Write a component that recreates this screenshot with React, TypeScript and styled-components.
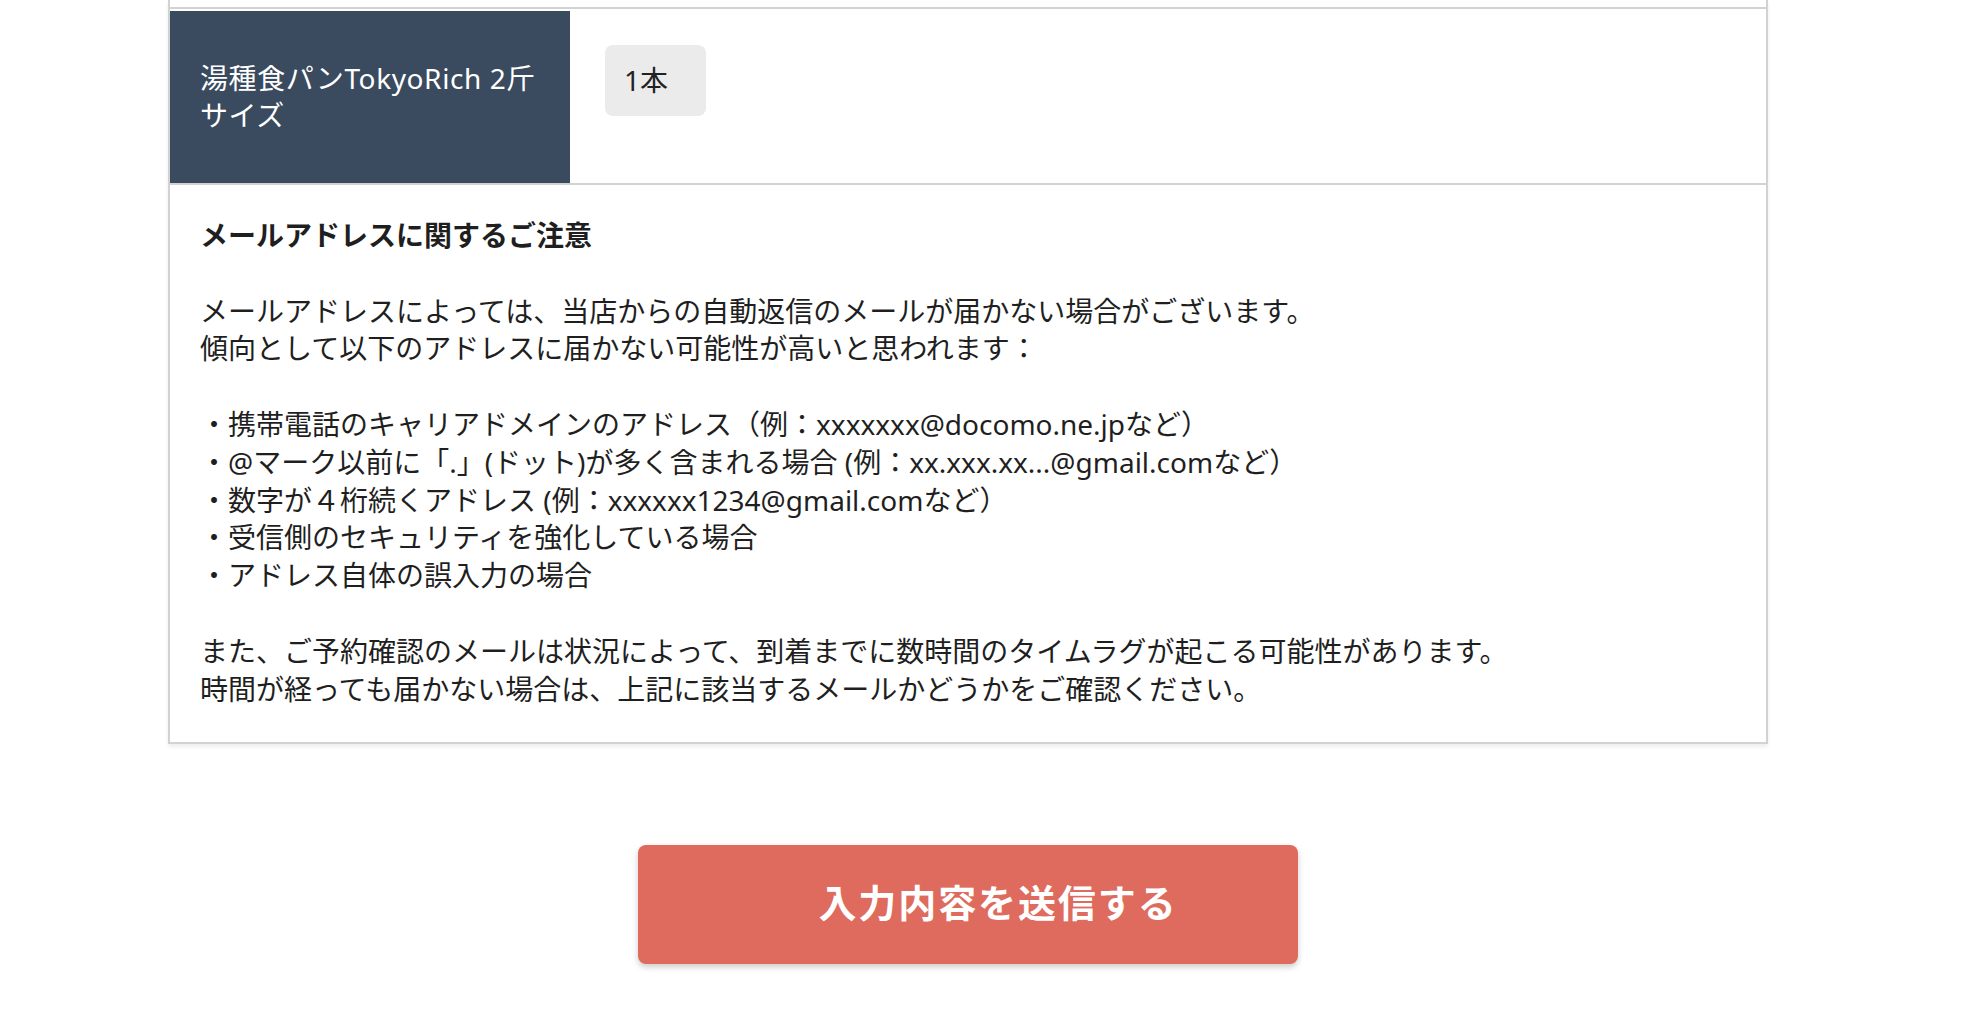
import styled, { createGlobalStyle } from 'styled-components';

const GlobalStyle = createGlobalStyle`
  html, body {
    margin: 0;
    padding: 0;
    background: #fff;
  }
  body {
    font-family: "Noto Sans", "Noto Sans CJK JP", sans-serif;
    color: #1f1f1f;
  }
`;

const LINE = 37.8;

const notices = [
  '・携帯電話のキャリアドメインのアドレス（例：xxxxxxx@docomo.ne.jpなど）',
  '・@マーク以前に「.」(ドット)が多く含まれる場合 (例：xx.xxx.xx...@gmail.comなど）',
  '・数字が４桁続くアドレス (例：xxxxxx1234@gmail.comなど）',
  '・受信側のセキュリティを強化している場合',
  '・アドレス自体の誤入力の場合',
];

export default function App() {
  return (
    <Page>
      <GlobalStyle />
      <FormTable>
        <PrevRowTail />
        <Row>
          <HeadCell>湯種食パンTokyoRich 2斤サイズ</HeadCell>
          <DataCell>
            <QtyBox>1本</QtyBox>
          </DataCell>
        </Row>
        <Notes>
          <NoteTitle>メールアドレスに関するご注意</NoteTitle>
          <NoteBlock>
            メールアドレスによっては、当店からの自動返信のメールが届かない場合がございます。
            <br />
            傾向として以下のアドレスに届かない可能性が高いと思われます：
          </NoteBlock>
          <NoteBlock>
            {notices.map((n) => (
              <span key={n}>
                {n}
                <br />
              </span>
            ))}
          </NoteBlock>
          <NoteBlock last>
            また、ご予約確認のメールは状況によって、到着までに数時間のタイムラグが起こる可能性があります。
            <br />
            時間が経っても届かない場合は、上記に該当するメールかどうかをご確認ください。
          </NoteBlock>
        </Notes>
      </FormTable>

      <SubmitArea>
        <SubmitButton type="button">入力内容を送信する</SubmitButton>
      </SubmitArea>
    </Page>
  );
}

const Page = styled.div`
  width: 1980px;
  height: 1036px;
  padding-left: 168px;
  box-sizing: border-box;
  overflow: hidden;
`;

const FormTable = styled.div`
  width: 1600px;
  box-sizing: border-box;
  border-left: 2px solid #d2d2d2;
  border-right: 2px solid #d2d2d2;
  border-bottom: 2px solid #d2d2d2;
  box-shadow: 0 3px 4px rgba(0, 0, 0, 0.07);
  background: #fff;
`;

const PrevRowTail = styled.div`
  height: 7px;
`;

const Row = styled.div`
  display: grid;
  grid-template-columns: 400px 1fr;
  border-top: 2px solid #d2d2d2;
  padding-top: 2px;
`;

const HeadCell = styled.div`
  display: flex;
  align-items: center;
  min-height: 172px;
  box-sizing: border-box;
  padding: 0 28px 0 30px;
  background: #3a4a5f;
  color: #fff;
  font-size: 28px;
  line-height: 37px;
  letter-spacing: 0.6px;
`;

const DataCell = styled.div`
  padding: 34px 35px;
`;

const QtyBox = styled.div`
  display: flex;
  align-items: center;
  width: 101px;
  height: 71px;
  box-sizing: border-box;
  padding: 0 0 3px 19px;
  border-radius: 8px;
  background: #ebebeb;
  color: #222;
  font-size: 28px;
`;

const Notes = styled.div`
  border-top: 2px solid #d2d2d2;
  padding: 32px 30px 34px 30px;
  font-size: 28px;
  line-height: ${LINE}px;
`;

const NoteTitle = styled.p`
  margin: 0 0 ${LINE}px;
  font-weight: 700;
`;

const NoteBlock = styled.p<{ last?: boolean }>`
  margin: 0 0 ${(p) => (p.last ? 0 : LINE)}px;
`;

const SubmitArea = styled.div`
  width: 1600px;
  display: flex;
  justify-content: center;
  margin-top: 101px;
`;

const SubmitButton = styled.button`
  width: 660px;
  height: 119px;
  padding: 0 0 9px 60px;
  border: none;
  border-radius: 8px;
  background: #de6b5d;
  box-shadow: 0 3px 6px rgba(0, 0, 0, 0.2);
  color: #fff;
  font-family: "Noto Sans", "Noto Sans CJK JP", sans-serif;
  font-size: 38px;
  font-weight: 700;
  letter-spacing: 0.05em;
  cursor: pointer;
`;
